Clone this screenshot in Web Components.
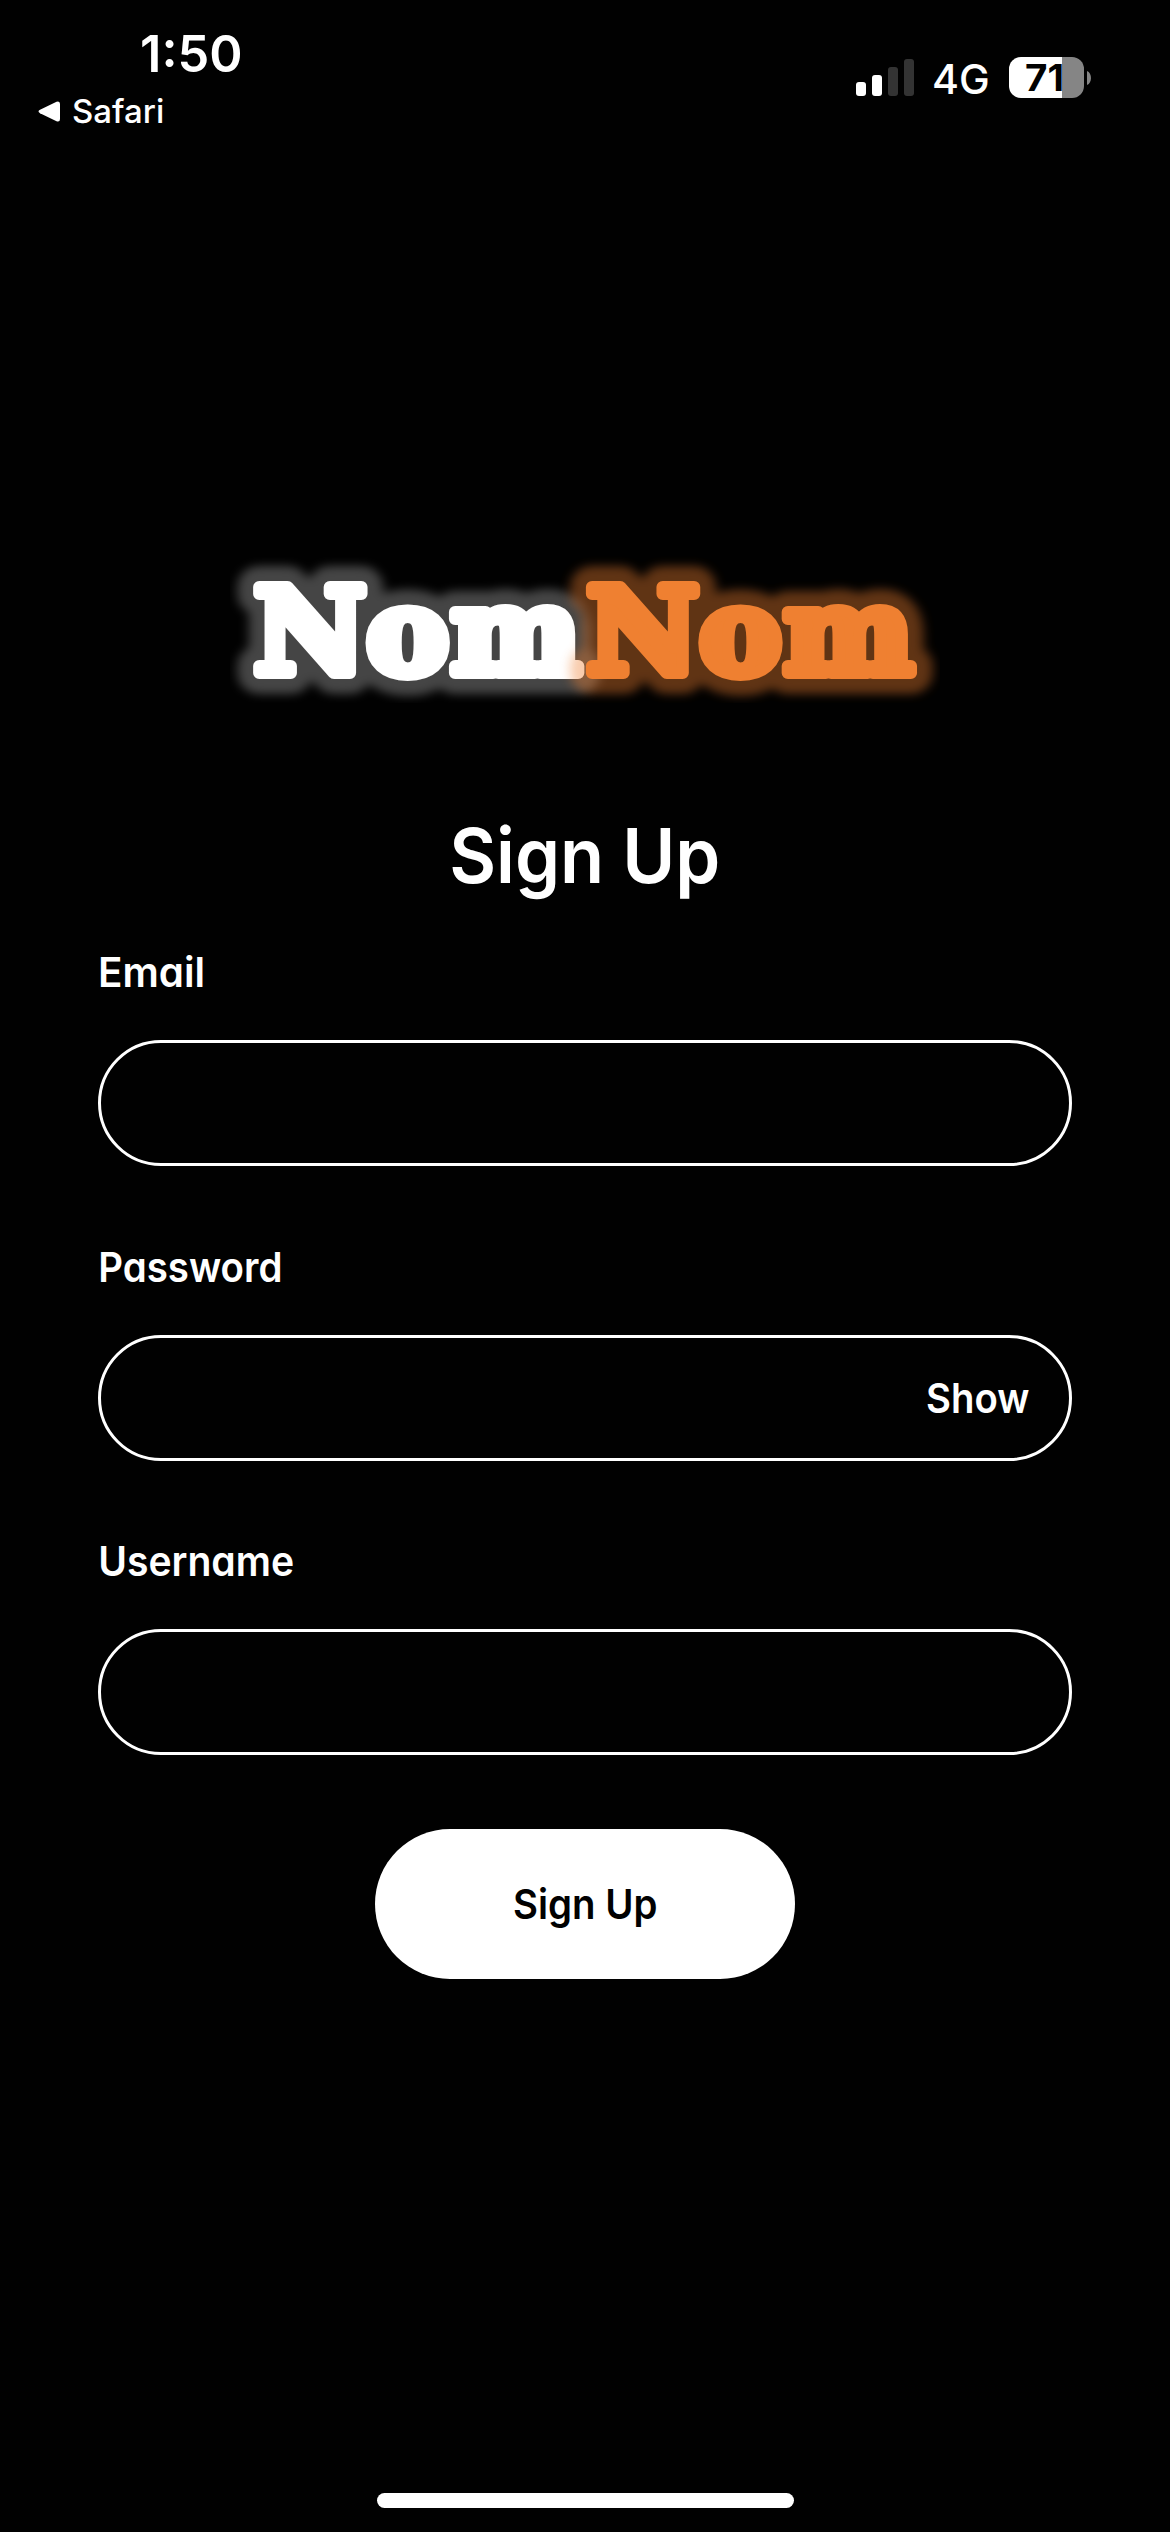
<!DOCTYPE html>
<html lang="en">
<head>
<meta charset="utf-8">
<title>NomNom – Sign Up</title>
<style>
html,body{margin:0;background:#010101}
body{width:1170px;height:2532px;overflow:hidden;color:#fff;font-family:Inter,"Liberation Sans",sans-serif}
</style>
</head>
<body>
<signup-screen></signup-screen>
<script>
const define=(name,html,setup)=>customElements.define(name,class extends HTMLElement{
  connectedCallback(){
    if(this.shadowRoot)return;
    const t=document.createElement('template');
    t.innerHTML=typeof html==='function'?html(this):html;
    this.attachShadow({mode:'open'}).append(t.content.cloneNode(true));
    if(setup)setup(this);
  }
});

/* One line of type: the box spans the visible ink and stands on the baseline. */
define('type-line',el=>{
  const a=n=>el.getAttribute(n);
  return `<style>:host{display:block;flex:none;width:${a('w')}px;height:${a('h')}px}
  svg{display:block;overflow:visible;width:100%;height:100%}
  text{font-family:Inter,"Liberation Sans",sans-serif;font-size:${a('size')}px;font-weight:${a('weight')};fill:currentColor;${a('alt')!==null?'font-feature-settings:"cv11" 1,"ss03" 0;':''}}</style>
  <svg><text y="${a('h')}">${a('text')}</text></svg>`;
},el=>{
  const t=el.shadowRoot.querySelector('text');
  const c=document.createElement('canvas').getContext('2d');
  c.font=`${el.getAttribute('weight')} ${el.getAttribute('size')}px Inter, "Liberation Sans", sans-serif`;
  const m=c.measureText(el.getAttribute('text'));
  const left=-m.actualBoundingBoxLeft,right=m.width-m.actualBoundingBoxRight;
  const s=+el.getAttribute('w')/(t.getComputedTextLength()-left-right);
  t.setAttribute('transform',`scale(${s} 1) translate(${-left} 0)`);
});

define('signal-bars',`<style>:host{display:flex;align-items:flex-end;gap:6px;height:37px}
i{width:10px;border-radius:3px;background:#fff}.off{background:#333}</style>
<i style="height:14px"></i><i style="height:21px"></i><i class="off" style="height:29px"></i><i class="off" style="height:37px"></i>`);

define('battery-level',`<style>:host{display:flex;align-items:center;gap:3px}
.cell{box-sizing:border-box;width:75px;height:41px;border-radius:12px;background:linear-gradient(90deg,#fff 53px,#858585 53px);color:#010101;padding:7px 0 0 17px}
svg{display:block}</style>
<div class="cell"><type-line text="71" w="36" h="27" size="37" weight="700"></type-line></div>
<svg width="4" height="14"><path d="M0 0C5.300 2 5.300 12 0 14Z" fill="#858585"/></svg>`);

define('status-bar',`<style>:host{display:flex;justify-content:space-between;height:140px;box-sizing:border-box;padding:35px 79px 0 38px}
.left{display:flex;flex-direction:column;gap:27px}.time{padding-left:104px}
.back{display:flex;align-items:flex-end;gap:13px}.back svg{margin-bottom:1px}
.right{display:flex;align-items:center;height:41px;margin-top:22px}
.net{margin:2px 21px 0 20px}</style>
<div class="left"><div class="time"><type-line text="1:50" w="99" h="37" size="51" weight="600"></type-line></div>
<div class="back"><svg width="22" height="21"><path d="M2 8.800L18.500 .7Q22 -.5 22 3V18Q22 21.500 18.500 20.300L2 12.200Q-1 10.500 2 8.800Z" fill="#fff"/></svg>
<type-line text="Safari" w="90" h="24" size="33" weight="450"></type-line></div></div>
<div class="right"><signal-bars></signal-bars><type-line class="net" text="4G" w="54" h="30" size="41" weight="450"></type-line><battery-level></battery-level></div>`);

define('brand-logo',`<style>:host{display:block;width:710px;height:150px;overflow:hidden}
svg{display:block}text{font-family:"DejaVu Serif","Liberation Serif",serif;font-weight:700;font-size:118px;stroke-linejoin:round;stroke-linecap:round}</style>
<svg width="710" height="150">
<defs><filter id="soft" x="-20%" y="-40%" width="140%" height="180%"><feGaussianBlur stdDeviation="5"/></filter></defs>
<g transform="scale(1.04 1)">
<g opacity=".267" aria-hidden="true"><text x="23 131.500 212.500" y="120" fill="#fff" stroke="#fff" stroke-width="42" filter="url(#soft)">Nom</text></g>
<text x="23 131.500 212.500" y="120" fill="#fff" stroke="#fff" stroke-width="12">Nom</text>
<g opacity=".4" aria-hidden="true"><text x="343 451.500 532.500" y="120" fill="#ef8031" stroke="#ef8031" stroke-width="42" filter="url(#soft)">Nom</text></g>
<text x="343 451.500 532.500" y="120" fill="#ef8031" stroke="#ef8031" stroke-width="12">Nom</text>
</g></svg>`);

define('form-field',`<style>:host{display:flex;flex-direction:column;gap:53px}
.label{padding-left:3px}
.box{box-sizing:border-box;height:126px;border:3px solid #fff;border-radius:63px;display:flex;align-items:center;justify-content:flex-end;padding-right:40px}</style>
<div class="label"><slot name="label"></slot></div><div class="box"><slot></slot></div>`);

define('pill-button',`<style>:host{display:flex;align-items:center;justify-content:center;width:420px;height:150px;border-radius:75px;background:#fff;color:#010101}</style><slot></slot>`);

define('home-indicator',`<style>:host{display:block;width:417px;height:15px;border-radius:8px;background:#fff}</style>`);

define('signup-screen',`<style>:host{display:flex;flex-direction:column;align-items:center;width:1170px;height:2532px;background:#010101}
status-bar{align-self:stretch}brand-logo{margin-top:413px}
.title{margin:125px 0 74px 0}
.fields{display:flex;flex-direction:column;width:974px}
.f2{margin-top:86px}.f3{margin-top:85px}
pill-button{margin-top:74px}home-indicator{margin-top:auto;margin-bottom:24px}</style>
<status-bar></status-bar>
<brand-logo></brand-logo>
<type-line class="title" text="Sign Up" w="266" h="55" size="76" weight="600" alt></type-line>
<div class="fields">
<form-field><type-line slot="label" text="Email" w="101.500" h="30" size="41" weight="600" alt></type-line></form-field>
<form-field class="f2"><type-line slot="label" text="Password" w="179" h="30" size="41" weight="600" alt></type-line><type-line text="Show" w="102" h="30" size="41" weight="600" alt></type-line></form-field>
<form-field class="f3"><type-line slot="label" text="Username" w="192" h="30" size="41" weight="600" alt></type-line></form-field>
</div>
<pill-button><type-line text="Sign Up" w="142" h="30" size="41" weight="600" alt></type-line></pill-button>
<home-indicator></home-indicator>`);
</script>
</body>
</html>
